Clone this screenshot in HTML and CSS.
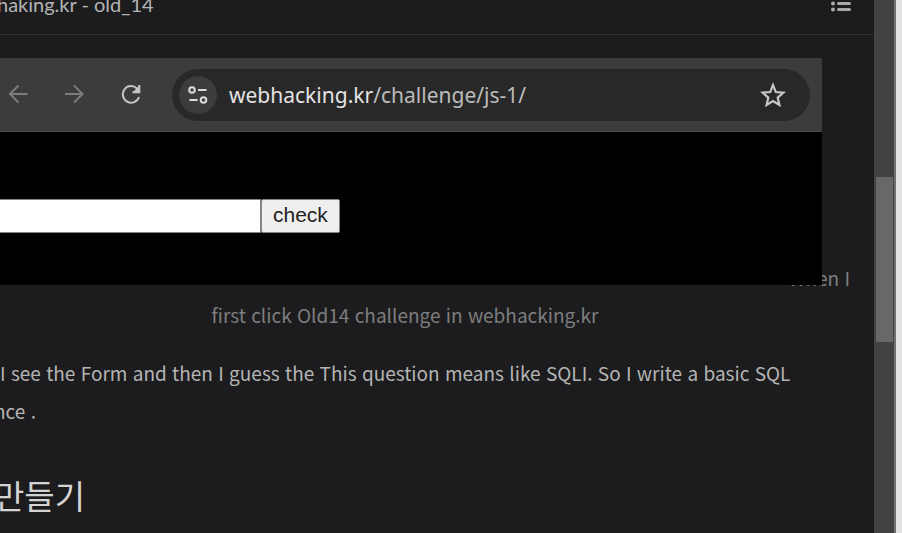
FILE: index.html
```html
<!DOCTYPE html>
<html lang="ko">
<head>
<meta charset="utf-8">
<title>old_14</title>
<link rel="stylesheet" href="styles.css">
</head>
<body>
<div class="window">
  <div class="page">
    <header class="topbar">
      <span class="topbar-title">haking.kr - old_14</span>
      <button class="toc" type="button" aria-label="Contents">
        <svg width="20" height="18" viewBox="0 0 20 18" fill="none" stroke="#a9a9a9" stroke-width="3" stroke-linecap="round"><path d="M2 2h0M2 8.500h0M2 14.500h0" stroke-width="4"/><path d="M7.500 2h11M7.500 8.500h11M7.500 14.500h11"/></svg>
      </button>
    </header>
    <main class="article">
      <figure class="figure">
        <div class="browser">
          <div class="toolbar">
            <svg class="nav-icon dim" viewBox="0 0 20 20"><path d="M19.500 9H2M10.500 .5L2 9l8.500 8.500"/></svg>
            <svg class="nav-icon dim" viewBox="0 0 20 20"><path d="M1 9h17M10 .5L18.500 9 10 17.500"/></svg>
            <svg class="nav-icon reload" viewBox="0 0 20 20"><path d="M19 12A8.300 8.300 0 1 1 17 3.500L18 5"/><path d="M19.300 0v7.200H12.500" /><path class="fill" d="M20 0v7h-7z"/></svg>
            <div class="address">
              <span class="site">
                <svg width="20" height="20" viewBox="0 0 20 20" fill="none" stroke="#dcdcdc" stroke-width="2"><circle cx="4" cy="5" r="2.800"/><path d="M10 5h8.500M1.500 15h8"/><circle cx="15.500" cy="15" r="2.800"/></svg>
              </span>
              <span class="url"><span class="host">webhacking.kr</span>/challenge/js-1/</span>
              <svg class="star" viewBox="0 0 24 24"><path d="M12 2.800l2.600 6.500 7 .5-5.300 4.600 1.600 6.800L12 17.500l-5.900 3.700 1.600-6.800-5.300-4.600 7-.5z"/></svg>
            </div>
          </div>
          <form class="viewport">
            <input class="field" type="text" aria-label="Value"><button class="check" type="button">check</button>
          </form>
        </div>
        <figcaption class="caption"><span class="caption-start">When I</span><span class="caption-rest">first click Old14 challenge in webhacking.kr</span></figcaption>
      </figure>
      <p class="text">I see the Form and then I guess the This question means like SQLI. So I write a basic SQL<br><span class="cut">nce .</span></p>
      <h2 class="heading">만들기</h2>
    </main>
  </div>
  <div class="scrollbar"><div class="thumb"></div></div>
  <div class="edge"></div>
</div>
</body>
</html>
```
FILE: styles.css
```css
* { box-sizing: border-box; }
body {
  margin: 0;
  background: #1c1c1e;
  color: #b4b4b4;
  font-family: "Noto Sans CJK KR", sans-serif;
}
.window {
  display: grid;
  grid-template-columns: minmax(0, 1fr) 20px 8px;
  height: 100vh;
  overflow: hidden;
}
.page { overflow: hidden; }
.topbar {
  display: flex;
  justify-content: space-between;
  height: 35px;
  padding-right: 23px;
  border-bottom: 1px solid #303032;
}
.topbar-title {
  margin: -8px 0 0 -3px;
  font: 20px/24px Lato, sans-serif;
}
.toc {
  margin-top: -5px;
  height: 18px;
  padding: 0;
  border: 0;
  background: none;
}
.toc svg { display: block; }
.article { padding: 23px 24px 0 0; }
.figure { margin: 0; }
.browser {
  position: relative;
  z-index: 1;
  margin-right: 28px;
  background: #000;
}
.toolbar {
  display: flex;
  align-items: center;
  gap: 36px;
  height: 74px;
  padding: 0 12px 0 8px;
  background: #3c3c3c;
  border-bottom: 1px solid #484848;
}
.nav-icon {
  flex: none;
  width: 20px;
  height: 20px;
  fill: none;
  stroke: #c4c4c4;
  stroke-width: 2;
}
.dim { stroke: #7c7c7c; }
.reload { overflow: visible; }
.reload .fill { fill: #c4c4c4; stroke: none; }
.address {
  flex: 1;
  display: flex;
  align-items: center;
  gap: 12px;
  height: 52px;
  margin-left: -4px;
  padding: 0 24px 0 7px;
  border-radius: 26px;
  background: #282828;
}
.site {
  display: grid;
  place-items: center;
  width: 38px;
  height: 38px;
  border-radius: 50%;
  background: #3c3c3c;
}
.url {
  flex: 1;
  font: 21px/30px "Noto Sans", sans-serif;
  color: #bcbcbc;
}
.host { color: #e4e4e4; }
.star {
  width: 26px;
  height: 26px;
  fill: none;
  stroke: #c8c8c8;
  stroke-width: 2;
}
.viewport {
  display: flex;
  height: 153px;
  padding-top: 67px;
}
.field {
  width: 261px;
  height: 34px;
  border: 1px solid #858585;
  border-left: 0;
  background: #fff;
}
.check {
  height: 34px;
  padding: 0 11px 3px;
  border: 1px solid #858585;
  border-radius: 2px;
  background: #efefef;
  color: #222;
  font: 21px/28px "Liberation Sans", sans-serif;
}
.caption {
  margin: -26px 0 0 -40px;
  color: #7e7e7e;
  font-size: 19px;
  line-height: 37px;
  text-align: center;
}
.caption-start, .caption-rest { display: block; }
.caption-start { text-align: right; }
.text {
  margin: 21px 0 0;
  font-size: 19px;
  line-height: 38px;
  white-space: nowrap;
}
.cut { margin-left: -6px; }
.heading {
  margin: 41px 0 0 -6px;
  color: #d4d4d4;
  font-size: 33px;
  font-weight: 400;
  line-height: 48px;
}
.scrollbar {
  padding: 177px 1px 0 2px;
  background: #424242;
}
.thumb {
  height: 165px;
  background: #686868;
}
.edge {
  border-left: 2px solid #707070;
  background: #e2e2e2;
}
```
